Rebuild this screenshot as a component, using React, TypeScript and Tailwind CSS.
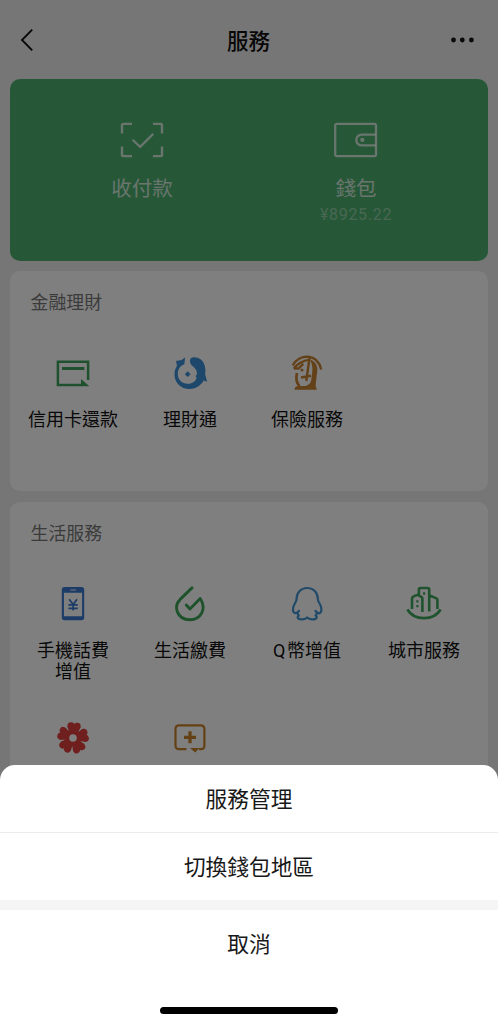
import React from 'react';

interface ServiceItem {
  label: string;
  icon: React.ReactNode;
}

interface ServiceCardProps {
  title: string;
  items: ServiceItem[];
  className?: string;
}

const BackIcon = () => (
  <svg width="14" height="24" viewBox="0 0 14 24" fill="none" stroke="#111" strokeWidth="1.9">
    <path d="M12.2 1.7 2 12l10.2 10.3" />
  </svg>
);

const MoreIcon = () => (
  <svg width="24" height="6" viewBox="0 0 24 6" fill="#111">
    <circle cx="2.5" cy="3" r="2.4" />
    <circle cx="11.3" cy="3" r="2.4" />
    <circle cx="20.4" cy="3" r="2.4" />
  </svg>
);

const ScanIcon = () => (
  <svg width="44" height="36" viewBox="0 0 44 36" fill="none" stroke="currentColor" strokeWidth="2.4">
    <path d="M2 11.5V3.2Q2 1.9 3.3 1.9H12M33 1.9h7.7q1.3 0 1.3 1.3v8.3M42 24.5v8.3q0 1.3-1.3 1.3H33M12 34.1H3.3q-1.3 0-1.3-1.3v-8.3" />
    <path d="m12.5 17.8 7.7 7.1 13-13" strokeWidth="2.2" />
  </svg>
);

const WalletIcon = () => (
  <svg width="44" height="36" viewBox="0 0 44 36" fill="none" stroke="currentColor" strokeWidth="2.3">
    <rect x="1.2" y="1.9" width="40.8" height="32.2" rx="1.5" />
    <path d="M42 12.6H27.7a5.4 5.4 0 0 0 0 10.8H42" />
    <circle cx="28.3" cy="17.9" r="2.1" fill="currentColor" stroke="none" />
  </svg>
);

const CardIcon = () => (
  <svg width="36" height="36" viewBox="0 0 36 36" fill="none">
    <path d="M33.1 25V6.8H2.9v23.3H27" stroke="#3fa25e" strokeWidth="2.5" />
    <path d="M7 13.5h22.4" stroke="#3fa25e" strokeWidth="3" />
    <path d="M26 23.9v7.4h8.4z" fill="#3fa25e" />
  </svg>
);

const FortuneIcon = () => (
  <svg width="36" height="36" viewBox="0 0 36 36" fill="#3a90d6">
    <path d="M4 6 9.500 5 13.200 2.400 12.300 9.200C8.200 10.800 5.800 14.500 5.800 19c0 5.700 4.300 9.800 9.800 9.800 4.300 0 7.700-2.300 9.100-5.900l-1.200-1.900 1.500-1.600c.1-3.100-1.200-5.700-3.300-7.300C18.900 10 17.600 7.700 18 5.200c.2-1.600 1.200-2.600 2.600-2.800 5.500-.6 10.500 2.500 12 7.800.9 3.400 1 6.300.6 9.200l1.900 7.400-3.500-1.400c-2.800 5.300-8.200 8.500-14.200 8.500C8.900 33.900 2.500 27.700 2.500 19.400c0-3.400.9-6.300 2.500-8.700Z" />
    <path d="m15.700 16.300 2.900 2.900-2.900 2.900-2.900-2.900Z" />
  </svg>
);

const InsuranceIcon = () => (
  <svg width="36" height="36" viewBox="0 0 36 36" fill="none" stroke="#c98432">
    <path d="M3.7 10.5C10.5-2 28.5-1.5 32.2 14.5" strokeWidth="2.4" />
    <path d="M4.7 13.7C8.5 8.3 13.3 5.7 21 4.600M5 13.500h4.500l4.800-4.600" strokeWidth="2.4" />
    <path d="M20.5 3 17.3 26M12 22.5l10-1.8" strokeWidth="2.5" />
    <path d="M8 18c-1.3 5.500-.6 9.900 2.500 13.100" strokeWidth="2.8" />
    <path d="M21 4.500c5.300 1.900 7.900 6 7.300 11.300l-1.700 15 1.300 4H5.500c.2-2.300 1.200-3.400 3.300-3.700h6.100c4.600-.3 7.100-3.100 7.500-7.200l.8-6.300c.6-4.900-.1-9.200-2.200-13.100Z" fill="#c98432" stroke="none" />
    <circle cx="13" cy="15" r="1.6" fill="#c98432" stroke="none" />
  </svg>
);

const PhoneIcon = () => (
  <svg width="36" height="36" viewBox="0 0 36 36" fill="none">
    <path d="M9.500 1.100h17q2.700 0 2.700 2.700v27.800q0 2.700-2.700 2.700h-17q-2.700 0-2.700-2.700V3.800q0-2.700 2.700-2.700ZM8.900 6.800v23.400h18.200V6.800Z" fill="#3877ce" fillRule="evenodd" />
    <path d="M15.900 4h4.500" stroke="#b7cced" strokeWidth="1.4" strokeLinecap="round" />
    <path d="m14.200 13.200 3.900 5.400 3.900-5.400M13.400 18.800h9.400M13.400 22.300h9.400M18.100 18.300V24.500" stroke="#3877ce" strokeWidth="1.7" />
  </svg>
);

const UtilityIcon = () => (
  <svg width="36" height="36" viewBox="0 0 36 36" fill="none" stroke="#3aa556" strokeWidth="2.9" strokeLinecap="round" strokeLinejoin="round">
    <path d="M20 1.900 8.100 13.400c-6.900 7-3.200 20.200 9.600 20.400 11.500.1 17.200-11.500 10.500-21.300L17.900 23l-3.600-4" />
  </svg>
);

const QCoinIcon = () => (
  <svg width="36" height="36" viewBox="0 0 36 36" fill="none" stroke="#4296d3" strokeWidth="2.2" strokeLinejoin="round" strokeLinecap="round">
    <path d="M18.200 2C11.500 2 7.600 7 7.600 13c0 1.500-.6 2.800-1.600 4.200-2.200 3.800-2.400 7-1.400 9 .9 1.300 2.600 1.200 3.900.3.200 1.500.6 2.300 1.400 3-1.300.8-1.600 1.900-.8 2.900 1.600 1.600 7.100 1.300 9.100-.9 2 2.200 7.500 2.500 9.100.9.800-1 .5-2.100-.8-2.900.8-.7 1.200-1.500 1.400-3 1.300.9 3 1 3.900-.3 1-2 .8-5.200-1.400-9-1-1.400-1.600-2.700-1.600-4.200C28.800 7 24.900 2 18.200 2Z" />
    <path d="M8.500 26.500 10 24.800M27.900 26.500l-1.500-1.700" />
  </svg>
);

const CityIcon = () => (
  <svg width="36" height="36" viewBox="0 0 36 36" fill="none" stroke="#3fa65c" strokeWidth="2.6" strokeLinejoin="round">
    <path d="M6 23V12.500q0-1.300 1.200-1.900l3.300-1.500q1.100-.4 2.100.2l2.800 1.500q1 .6 1 1.800V26M12.900 9V3.500Q12.900 2 14.400 2h7.300q1.500 0 1.500 1.500v22M23.200 9.200l7.200 3.200q1 .5 1 1.600v9" />
    <path d="M1.4 23.500c6.800 11.500 26.400 11.500 33.200 0" strokeWidth="2.8" />
    <path d="M17 6.200h2.200v2.500H17zM10.300 14.300h2.200v2.200h-2.200zM10.300 19h2.200v2.200h-2.200z" fill="#3fa65c" stroke="none" />
  </svg>
);

const FlowerIcon = () => (
  <svg width="36" height="36" viewBox="0 0 36 36" fill="#dc3f3d">
    {[5, 77, 149, 221, 293].map((angle) => (
      <g key={angle} transform={`rotate(${angle} 18 18)`}>
        <circle cx="14.9" cy="6" r="3.5" />
        <circle cx="21.1" cy="6" r="3.5" />
        <path d="M11.4 6.500h13.200L20.500 18h-5Z" />
      </g>
    ))}
    <circle cx="18" cy="18" r="7.5" />
    <circle cx="18" cy="18" r="3.8" fill="#fff" />
  </svg>
);

const MedicalIcon = () => (
  <svg width="36" height="36" viewBox="0 0 36 36" fill="none" stroke="#c98229">
    <path d="M14.500 29.200H7.200q-3.700 0-3.700-3.700V9q0-3.700 3.700-3.700h21.500q3.700 0 3.700 3.700v16.500q0 3.700-3.700 3.700H27" strokeWidth="2.2" />
    <path d="M18 11.300v12M12 17.300h12" strokeWidth="3.3" />
    <path d="M18 28.100h9.500l-4.300 4.400z" fill="#c98229" stroke="none" />
  </svg>
);

const financeItems: ServiceItem[] = [
  { label: '信用卡還款', icon: <CardIcon /> },
  { label: '理財通', icon: <FortuneIcon /> },
  { label: '保險服務', icon: <InsuranceIcon /> },
];

const lifeItems: ServiceItem[] = [
  { label: '手機話費\n增值', icon: <PhoneIcon /> },
  { label: '生活繳費', icon: <UtilityIcon /> },
  { label: 'Q\u200a幣增值', icon: <QCoinIcon /> },
  { label: '城市服務', icon: <CityIcon /> },
  { label: '', icon: <FlowerIcon /> },
  { label: '', icon: <MedicalIcon /> },
];

const ServiceCard: React.FC<ServiceCardProps> = ({ title, items, className = '' }) => (
  <section className={`mx-[10px] rounded-[10px] bg-white pr-[5.5px] pl-[4.5px] pt-[16.5px] ${className}`}>
    <h2 className="pl-4 text-[17.9px] leading-[27px] text-[#777]">{title}</h2>
    <div className="mt-[40.5px] grid grid-cols-4 gap-y-[38px]">
      {items.map((item, index) => (
        <div key={index} className="flex flex-col items-center">
          {item.icon}
          <p className="mt-[18px] text-center font-[Roboto,'Noto_Sans_CJK_TC',sans-serif] text-[18px] leading-[21px] whitespace-pre-line text-[#111]">
            {item.label}
          </p>
        </div>
      ))}
    </div>
  </section>
);

const ActionSheet = () => (
  <div className="absolute inset-x-0 bottom-0 flex h-[259px] flex-col rounded-t-[15px] bg-white text-[21.7px] text-[#181818]">
    <button className="h-[68px] border-b border-[#ececec]">服務管理</button>
    <button className="h-[67px]">切換錢包地區</button>
    <div className="h-[10px] bg-[#f5f5f5]" />
    <button className="h-[66px]">取消</button>
    <div className="mx-auto mt-[31px] h-[7px] w-[178px] rounded-full bg-black" />
  </div>
);

export default function App() {
  return (
    <div className="relative h-[1024px] w-full overflow-hidden bg-[#ededed] font-['Noto_Sans_CJK_TC',sans-serif]">
      <header className="flex h-[79px] items-center justify-between pt-px pr-[23px] pl-5">
        <BackIcon />
        <h1 className="pl-3 text-[21.5px] font-medium text-[#111]">服務</h1>
        <MoreIcon />
      </header>

      <div className="mx-[10px] grid h-[182px] grid-cols-2 rounded-[10px] bg-[#4cb06e] pl-[26px] text-white/75">
        <div className="flex flex-col items-center pt-[42.5px] pr-[14px]">
          <ScanIcon />
          <span className="mt-[14.5px] text-[20.5px] leading-[30px]">收付款</span>
        </div>
        <div className="flex flex-col items-center pt-[42.5px] pr-[38px]">
          <WalletIcon />
          <span className="mt-[14.5px] text-[20.5px] leading-[30px]">錢包</span>
          <span className="mt-[3px] font-[Roboto,sans-serif] text-[16px] leading-5 tracking-[0.7px] text-white/40">
            ¥8925.22
          </span>
        </div>
      </div>

      <ServiceCard title="金融理財" items={financeItems} className="mt-[10px] h-[220px]" />
      <ServiceCard title="生活服務" items={lifeItems} className="mt-[11px] h-[340px]" />

      <div className="absolute inset-0 bg-black/50" />
      <ActionSheet />
    </div>
  );
}
